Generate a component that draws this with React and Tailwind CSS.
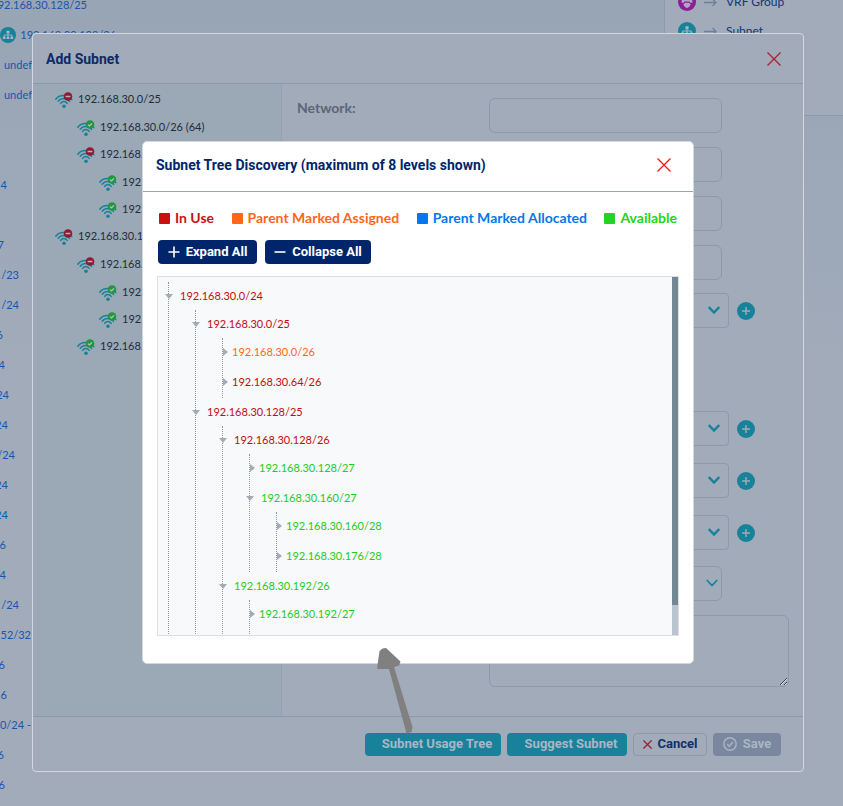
const LINKS = [
  { text: "192.168.30.128/25", end: 87 },
  { text: "192.168.30.128/26", end: 116, icon: true },
  { text: "undef", end: 32 },
  { text: "undef", end: 32 },
  { text: "", end: 0 },
  { text: "", end: 0 },
  { text: "4", end: 7 },
  { text: "", end: 0 },
  { text: "7", end: 4 },
  { text: "/23", end: 19 },
  { text: "/24", end: 19 },
  { text: "6", end: 3 },
  { text: "4", end: 5 },
  { text: "24", end: 9 },
  { text: "24", end: 8 },
  { text: "/24", end: 15 },
  { text: "24", end: 8 },
  { text: "24", end: 8 },
  { text: "6", end: 6 },
  { text: "4", end: 6 },
  { text: "/24", end: 19 },
  { text: "52/32", end: 31 },
  { text: "6", end: 5 },
  { text: "6", end: 7 },
  { text: "0/24 -", end: 31 },
  { text: "6", end: 4 },
  { text: "6", end: 5 },
];

const SUBNETS = [
  {
    name: "192.168.30.0/25",
    children: [
      { name: "192.168.30.0/26 (64)", free: true },
      {
        name: "192.168.30.64/26",
        children: [
          { name: "192.168.30.64/27", free: true },
          { name: "192.168.30.96/27", free: true },
        ],
      },
    ],
  },
  {
    name: "192.168.30.128/25",
    children: [
      {
        name: "192.168.30.128/26",
        children: [
          { name: "192.168.30.128/27", free: true },
          { name: "192.168.30.160/27", free: true },
        ],
      },
      { name: "192.168.30.192/26", free: true },
    ],
  },
];

const RED = "text-[#c00d0d]";
const ORANGE = "text-[#ff661a]";
const GREEN = "text-[#22cc22]";

const DISCOVERY = [
  {
    name: "192.168.30.0/24",
    color: RED,
    children: [
      {
        name: "192.168.30.0/25",
        color: RED,
        children: [
          { name: "192.168.30.0/26", color: ORANGE },
          { name: "192.168.30.64/26", color: RED },
        ],
      },
      {
        name: "192.168.30.128/25",
        color: RED,
        children: [
          {
            name: "192.168.30.128/26",
            color: RED,
            children: [
              { name: "192.168.30.128/27", color: GREEN },
              {
                name: "192.168.30.160/27",
                color: GREEN,
                children: [
                  { name: "192.168.30.160/28", color: GREEN },
                  { name: "192.168.30.176/28", color: GREEN },
                ],
              },
            ],
          },
          {
            name: "192.168.30.192/26",
            color: GREEN,
            children: [
              { name: "192.168.30.192/27", color: GREEN },
              { name: "192.168.30.224/27", color: GREEN },
            ],
          },
        ],
      },
    ],
  },
];

const LEGEND = [
  { label: "In Use", box: "bg-[#c81212]", text: "text-[#c81212]" },
  { label: "Parent Marked Assigned", box: "bg-[#ff661a]", text: "text-[#ff661a]" },
  { label: "Parent Marked Allocated", box: "bg-[#0577ea]", text: "text-[#0577ea]" },
  { label: "Available", box: "bg-[#22d422]", text: "text-[#22d422]" },
];

function NetworkBadge({ className }) {
  return (
    <svg viewBox="0 0 18 18" className={className} aria-hidden="true">
      <circle cx="9" cy="9" r="9" fill="#18829b" />
      <g fill="#a9b6c5">
        <rect x="7.4" y="4.2" width="3.2" height="3" rx=".5" />
        <rect x="3.2" y="10.6" width="3" height="3" rx=".5" />
        <rect x="7.5" y="10.6" width="3" height="3" rx=".5" />
        <rect x="11.8" y="10.6" width="3" height="3" rx=".5" />
      </g>
      <path d="M9 7v4M4.7 11V9h8.6v2" fill="none" stroke="#a9b6c5" />
    </svg>
  );
}

function GroupBadge({ className }) {
  return (
    <svg viewBox="0 0 18 18" className={className} aria-hidden="true">
      <circle cx="9" cy="9" r="9" fill="#8a1f96" />
      <path d="M3.5 9.5c0-4 2.5-5.500 5.500-5.500s5.500 1.500 5.500 5.500l-2 .5-1-1.500h-5l-1 1.500z" fill="#b3a3c4" />
      <path d="M5.200 11.600l2-1.800h3.600l2 1.800-1.500 2.200-2.300 1.400-2.300-1.400z" fill="#b3a3c4" />
    </svg>
  );
}

function WifiIcon({ free }) {
  return (
    <svg viewBox="0 0 18 16" className="h-4 w-[18px] shrink-0" aria-hidden="true">
      <g fill="none" stroke="#18829b" strokeWidth="1.5" strokeLinecap="round">
        <path d="M.8 7.200C4.200 2.600 12.400 2 16.800 7.600" />
        <path d="M3.200 9.200C6 5.600 11.600 5.400 14.600 9.400" />
        <path d="M5.600 11.400C7.400 9 10.400 9 12.200 11.400" />
      </g>
      <circle cx="9" cy="14.200" r="1.800" fill="#18829b" />
      <circle cx="13" cy="4.500" r="4.300" fill={free ? "#23973f" : "#8c1c33"} />
      {free ? (
        <path d="M11 4.600l1.500 1.400 2.500-2.700" fill="none" stroke="#b5c4c4" strokeWidth="1.200" />
      ) : (
        <path d="M10.600 4.500h4.800" stroke="#b9b0bd" strokeWidth="1.500" />
      )}
    </svg>
  );
}

function CloseIcon({ className, weight = 1.3 }) {
  return (
    <svg viewBox="0 0 14 14" className={className} fill="none" stroke="currentColor" strokeWidth={weight} aria-hidden="true">
      <path d="M.5.5l13 13M13.500.5l-13 13" />
    </svg>
  );
}

function SubnetList({ items, nested }) {
  return (
    <ul className={nested ? "pt-px pl-[22px]" : ""}>
      {items.map((item) => (
        <li key={item.name}>
          <div className="flex h-[27px] items-center gap-[5px] whitespace-nowrap">
            <WifiIcon free={item.free} />
            <span>{item.name}</span>
          </div>
          {item.children && <SubnetList items={item.children} nested />}
        </li>
      ))}
    </ul>
  );
}

function DiscoveryList({ items, nested }) {
  return (
    <ul className={`border-l border-dotted border-[#8d949b] ${nested ? "ml-[26px]" : ""}`}>
      {items.map((item) =>
        item.children ? (
          <li key={item.name}>
            <div className="flex h-7 items-center gap-[7px]">
              <svg viewBox="0 0 8 5" className="-ml-1 h-[5px] w-2" aria-hidden="true">
                <path d="M0 0h8L4 5z" fill="#a3abb3" />
              </svg>
              <span className={item.color}>{item.name}</span>
            </div>
            <DiscoveryList items={item.children} nested />
          </li>
        ) : (
          <li key={item.name} className="flex h-[30px] items-center gap-1 pb-0.5">
            <svg viewBox="0 0 5 8" className="h-2 w-[5px]" aria-hidden="true">
              <path d="M0 0l5 4-5 4z" fill="#a3abb3" />
            </svg>
            <span className={item.color}>{item.name}</span>
          </li>
        )
      )}
    </ul>
  );
}

function SelectRow({ id, label, add, gap }) {
  return (
    <div className={`flex items-center ${gap}`}>
      <label htmlFor={id} className="w-48 shrink-0 font-bold">{label}</label>
      <div className={`relative shrink-0 ${add ? "w-60" : "w-[233px]"}`}>
        <select
          id={id}
          className={`block h-[35px] w-full appearance-none border border-[#8d98a9] bg-transparent px-2 ${add ? "rounded" : "rounded-md"}`}
        />
        <svg
          viewBox="0 0 12 8"
          className={`pointer-events-none absolute top-[13px] h-2 w-3 ${add ? "right-[9px]" : "right-1"}`}
          fill="none"
          stroke="#18829b"
          strokeWidth={add ? 2.4 : 1.8}
          aria-hidden="true"
        >
          <path d="M.8 1L6 6.500 11.200 1" />
        </svg>
      </div>
      {add && (
        <button type="button" aria-label={`Add ${label}`} className="ml-2 size-[18px] shrink-0 rounded-full bg-[#18829b]">
          <svg viewBox="0 0 18 18" stroke="#a1abba" strokeWidth="1.400" aria-hidden="true">
            <path d="M9 5v8M5 9h8" />
          </svg>
        </button>
      )}
    </div>
  );
}

function InputRow({ id, label, gap }) {
  return (
    <div className={`flex ${gap}`}>
      <label htmlFor={id} className="w-48 shrink-0 text-sm leading-5 font-bold text-[#5a6678]">{label}</label>
      <input id={id} className="h-[35px] w-[233px] rounded-md border border-[#8d98a9] bg-transparent px-2" />
    </div>
  );
}

function Background() {
  return (
    <div className="flex h-screen overflow-hidden bg-linear-to-b from-[#98a5b5] to-[#a1abba] to-45%">
      <nav className="-mt-2.5 min-w-0 flex-1 text-[11px] text-[#1556ae]">
        {LINKS.map((link, i) => (
          <div key={i} className="flex h-[30px] shrink-0 items-center justify-end gap-1 whitespace-nowrap" style={{ width: link.end }}>
            {link.icon && <NetworkBadge className="size-4 shrink-0" />}
            {link.text && <a href="#subnet">{link.text}</a>}
          </div>
        ))}
      </nav>
      <aside className="h-[116px] w-[179px] shrink-0 border-b border-l border-[#8d98a9] bg-[#a1abba] pl-[13px] text-[#12356f]">
        {["VRF Group", "Subnet"].map((name, i) => (
          <div key={name} className="-mt-[7px] mb-[18px] flex h-[18px] items-center">
            {i ? <NetworkBadge className="size-[18px]" /> : <GroupBadge className="size-[18px]" />}
            <svg viewBox="0 0 13 9" className="ml-2 h-[9px] w-[13px]" fill="none" stroke="#71809a" strokeWidth="1.300" aria-hidden="true">
              <path d="M0 4.500h12M8.500 1l3.500 3.500L8.500 8" />
            </svg>
            <span className="ml-[9px]">{name}</span>
          </div>
        ))}
      </aside>
    </div>
  );
}

function AddSubnetDialog() {
  return (
    <section
      aria-label="Add Subnet"
      className="flex h-[739px] w-[772px] max-w-full flex-col rounded border border-[#d3d8df] bg-[#a1abba]"
    >
      <header className="flex h-[50px] shrink-0 items-center justify-between border-b border-[#8d98a9] pr-[22px] pl-[13px]">
        <h2 className="font-[Roboto,sans-serif] text-sm font-bold text-[#0d2a66]">Add Subnet</h2>
        <button type="button" aria-label="Close" className="text-[#b01e2e]">
          <CloseIcon className="size-3.5" />
        </button>
      </header>
      <div className="flex min-h-0 flex-1">
        <aside className="w-[249px] shrink-0 overflow-hidden border-r border-[#96a2b2] bg-[#9ba8b6] pt-0.5 pl-[22px] text-[11px] text-[#222c3d]">
          <SubnetList items={SUBNETS} />
        </aside>
        <form className="min-w-0 flex-1 pt-3.5 pl-[15px] text-[#5a6678]">
          <InputRow id="network" label="Network:" gap="mb-3.5" />
          <InputRow id="mask" label="Mask Bits:" gap="mb-3.5" />
          <InputRow id="name" label="Name:" gap="mb-3.5" />
          <InputRow id="gateway" label="Gateway:" gap="mb-[13px]" />
          <SelectRow id="vrf" label="VRF Group:" add gap="mb-[83px]" />
          <SelectRow id="customer" label="Customer:" add gap="mb-[17px]" />
          <SelectRow id="parent" label="Parent VLAN:" add gap="mb-[17px]" />
          <SelectRow id="category" label="Category:" add gap="mb-4" />
          <SelectRow id="assigned" label="Assigned:" gap="mb-3.5" />
          <div className="flex">
            <label htmlFor="notes" className="w-48 shrink-0 font-bold">Notes:</label>
            <textarea id="notes" className="h-[72px] w-[300px] rounded-md border border-[#8d98a9] bg-transparent" />
          </div>
        </form>
      </div>
      <footer className="flex h-[55px] shrink-0 items-center justify-end gap-1.5 border-t border-[#8d98a9] pr-[22px] font-[Roboto,sans-serif] text-[13px] leading-5 font-bold whitespace-nowrap text-[#a9b6c5]">
        <button type="button" className="h-[23px] w-[136px] rounded-sm bg-[#18829b] pl-2">Subnet Usage Tree</button>
        <button type="button" className="h-[23px] w-[120px] rounded-sm bg-[#18829b] pl-2">Suggest Subnet</button>
        <button type="button" className="flex h-[23px] w-[74px] items-center justify-center gap-1.5 rounded-sm border border-[#8d98a9] text-[#12306b]">
          <CloseIcon className="size-[9px] text-[#9c2236]" weight={2} />
          Cancel
        </button>
        <button type="button" className="flex h-[23px] w-[68px] items-center justify-center gap-1.5 rounded-sm bg-[#7a879f]">
          <svg viewBox="0 0 14 14" className="size-3.5" fill="none" stroke="currentColor" strokeWidth="1.400" aria-hidden="true">
            <circle cx="7" cy="7" r="6.200" />
            <path d="M4.200 7.200l2 2 3.800-4.200" />
          </svg>
          Save
        </button>
      </footer>
    </section>
  );
}

function DiscoveryDialog() {
  return (
    <section
      aria-label="Subnet Tree Discovery"
      className="relative w-[552px] max-w-full rounded-[5px] border border-[#d3d8df] bg-white"
    >
      <header className="flex h-[50px] items-center justify-between border-b border-[#98a2b3] pr-[22px] pb-1 pl-[13px]">
        <h2 className="font-[Roboto,sans-serif] text-sm font-bold text-[#00256b]">
          Subnet Tree Discovery (maximum of 8 levels shown)
        </h2>
        <button type="button" aria-label="Close" className="text-[#f01818]">
          <CloseIcon className="size-3.5" />
        </button>
      </header>
      <div className="px-3.5 pt-4 pb-[27px]">
        <ul className="flex h-5 items-center justify-between px-0.5 text-sm font-bold whitespace-nowrap">
          {LEGEND.map((entry) => (
            <li key={entry.label} className={`flex items-center gap-[5px] ${entry.text}`}>
              <span className={`size-[11px] rounded-[1px] ${entry.box}`} />
              {entry.label}
            </li>
          ))}
        </ul>
        <div className="mt-3 flex gap-2 pl-px font-[Roboto,sans-serif] text-[13px] font-bold whitespace-nowrap text-white">
          <button type="button" className="flex h-6 w-[99px] items-center justify-center gap-1.5 rounded-sm bg-[#00256b]">
            <svg viewBox="0 0 12 12" className="size-3" stroke="currentColor" strokeWidth="1.600" aria-hidden="true">
              <path d="M6 .5v11M.5 6h11" />
            </svg>
            Expand All
          </button>
          <button type="button" className="flex h-6 w-[106px] items-center justify-center gap-1.5 rounded-sm bg-[#00256b]">
            <svg viewBox="0 0 12 12" className="size-3" stroke="currentColor" strokeWidth="1.600" aria-hidden="true">
              <path d="M.5 6h11" />
            </svg>
            Collapse All
          </button>
        </div>
        <div className="mt-3 flex h-[360px] border border-[#dcdfe2] bg-[#f8f9fb] text-[11px]">
          <div className="min-w-0 flex-1 overflow-hidden pt-[5px] pl-[10px]">
            <DiscoveryList items={DISCOVERY} />
          </div>
          <div className="w-1.5 bg-[#b9c4d0]">
            <div className="h-[328px] bg-[#748894]" />
          </div>
        </div>
      </div>
      <svg viewBox="0 0 36 86" className="absolute top-[506px] left-[234px] h-[86px] w-9" fill="#808080" aria-hidden="true">
        <path d="M5.500.5L9 0l14.500 13.500-1.500 4-5 1.500 18.500 60-1 5-5 1.500L12 21l-9.500 0L0 20.500 2.500 3z" />
      </svg>
    </section>
  );
}

export default function App() {
  return (
    <div className="relative h-screen overflow-hidden font-[Lato,sans-serif] text-xs">
      <Background />
      <div className="absolute inset-0 flex items-start justify-center pt-[33px] pr-[7px]">
        <AddSubnetDialog />
      </div>
      <div className="absolute inset-0 flex items-start justify-center pt-[141px] pr-[7px]">
        <DiscoveryDialog />
      </div>
    </div>
  );
}
